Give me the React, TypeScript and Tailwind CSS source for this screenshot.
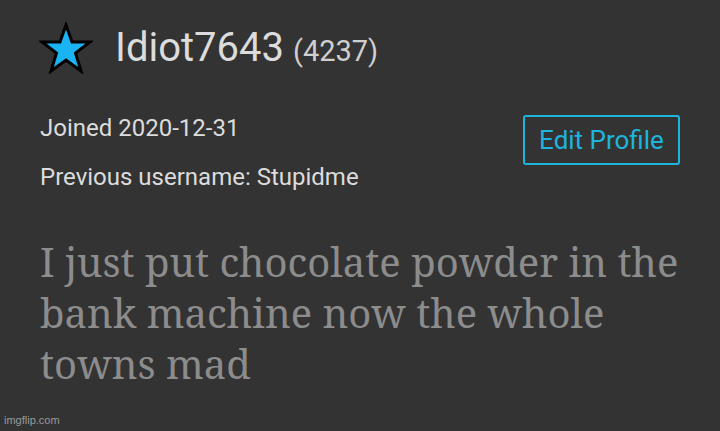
import React from "react";

function Star() {
  return (
    <svg width="54" height="52" viewBox="0 0 54 52">
      <polygon
        points="27,3 33,20 51,20 36.5,31 42,49 27,38 12,49 17.5,31 3,20 21,20"
        fill="#1ab4f5"
        stroke="#000"
        strokeWidth="3"
        strokeLinejoin="miter"
      />
    </svg>
  );
}

export default function App() {
  return (
    <div className="w-[720px] h-[431px] bg-[#333333] relative overflow-hidden font-['Roboto',sans-serif]">
      <div className="flex items-center pt-[20px] pl-[39px] gap-[22px] h-[76px]">
        <Star />
        <div className="flex items-baseline gap-[9px]">
          <span className="text-[40px] text-[#dcdcdc] leading-[56px]">Idiot7643</span>
          <span className="text-[29px] text-[#cfcfcf]">(4237)</span>
        </div>
      </div>
      <div className="flex justify-between items-start pl-[40px] pr-[40px] mt-[38px]">
        <div className="flex flex-col gap-[21px] text-[24px] text-[#dcdcdc] leading-[28px]">
          <span>Joined 2020-12-31</span>
          <span>Previous username: Stupidme</span>
        </div>
        <button className="mt-[1px] border-2 border-[#1eb4dd] rounded-[3px] w-[157px] h-[50px] text-[26px] text-[#1eb4dd]">
          Edit Profile
        </button>
      </div>
      <p className="pl-[40px] pr-[40px] mt-[45px] text-[40px] leading-[51px] text-[#8c8c8c] font-['Noto_Serif','DejaVu_Serif',serif]">
        I just put chocolate powder in the bank machine now the whole towns mad
      </p>
      <span className="absolute left-[4px] bottom-[3px] text-[11px] text-[#9a9a9a] font-['Liberation_Sans',sans-serif]">imgflip.com</span>
    </div>
  );
}
